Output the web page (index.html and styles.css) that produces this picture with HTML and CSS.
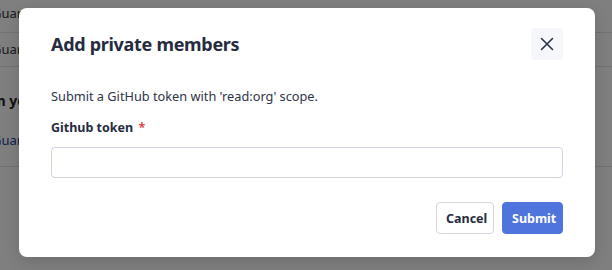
FILE: index.html
```html
<!DOCTYPE html>
<html lang="en">
<head>
    <meta charset="utf-8">
    <title>Add private members</title>
    <link rel="stylesheet" href="styles.css">
</head>
<body>
    <!-- Page behind the modal -->
    <div class="page">
        <div class="row row-top">Guard members list</div>
        <div class="row">Guard members list</div>
        <div class="section">
            <p class="section-title">m your organisation</p>
            <a class="section-link" href="#">Guard settings</a>
        </div>
    </div>

    <div class="overlay">
        <div class="modal">
            <div class="modal-header">
                <h2 class="modal-title">Add private members</h2>
                <button class="close-btn" aria-label="Close">
                    <svg width="14" height="14" viewBox="0 0 14 14">
                        <path d="M1.5 1.5 L12.5 12.5 M12.5 1.5 L1.5 12.5" stroke="#2b3046" stroke-width="1.6" stroke-linecap="round"/>
                    </svg>
                </button>
            </div>

            <p class="modal-text">Submit a GitHub token with 'read:org' scope.</p>

            <label class="field-label" for="token">Github token <span class="required">*</span></label>
            <input class="field-input" type="text" id="token">

            <div class="modal-footer">
                <button class="btn btn-cancel">Cancel</button>
                <button class="btn btn-submit">Submit</button>
            </div>
        </div>
    </div>
</body>
</html>
```

FILE: styles.css
```css
body {
    margin: 0;
    font-family: "Noto Sans", "Open Sans", sans-serif;
    color: #2a2f45;
    background-color: #fff;
    width: 612px;
    height: 270px;
    overflow: hidden;
    position: relative;
}

/* Page behind the modal */
.page {
    padding: 0;
}

.row {
    height: 33px;
    line-height: 33px;
    text-indent: -8px;
    font-size: 13px;
    color: #333;
    border-bottom: 1px solid #e4e4e8;
    white-space: nowrap;
}

.row-top {
    margin-top: -3px;
    height: 35px;
}

.section {
    height: 98px;
    border-bottom: 1px solid #e4e4e8;
    padding-top: 1px;
}

.section-title {
    margin: 23px 0 0 -8px;
    font-size: 14px;
    font-weight: 700;
    color: #222;
    white-space: nowrap;
}

.section-link {
    display: block;
    margin: 21px 0 0 -8px;
    font-size: 13px;
    color: #1d3f8f;
    text-decoration: none;
    white-space: nowrap;
}

.overlay {
    position: absolute;
    top: 0;
    left: 0;
    width: 100%;
    height: 100%;
    background-color: rgba(0, 0, 0, 0.5);
}

/* Modal */
.modal {
    position: absolute;
    top: 8px;
    left: 19px;
    width: 576px;
    height: 249px;
    box-sizing: border-box;
    background-color: #fff;
    border-radius: 8px;
    padding: 20px 32px 0 32px;
    box-shadow: 0 4px 16px rgba(0, 0, 0, 0.15);
}

.modal-header {
    display: flex;
    align-items: center;
    justify-content: space-between;
    height: 32px;
}

.modal-title {
    margin: 0;
    font-size: 18px;
    font-weight: 700;
    color: #262b40;
    letter-spacing: -0.3px;
}

.close-btn {
    width: 32px;
    height: 32px;
    border: none;
    border-radius: 4px;
    background-color: #f6f7fa;
    display: flex;
    align-items: center;
    justify-content: center;
    padding: 0;
    cursor: pointer;
}

.modal-text {
    margin: 28px 0 0 0;
    font-size: 12.75px;
    line-height: 17px;
    color: #2e3348;
}

.field-label {
    display: block;
    margin-top: 14px;
    font-size: 12.5px;
    font-weight: 700;
    line-height: 17px;
    color: #262b40;
}

.required {
    color: #e0474c;
    margin-left: 2px;
}

.field-input {
    display: block;
    box-sizing: border-box;
    width: 512px;
    height: 31px;
    margin-top: 11px;
    border: 1px solid #d3d1e2;
    border-radius: 4px;
    background-color: #fff;
}

.modal-footer {
    display: flex;
    justify-content: flex-end;
    gap: 8px;
    margin-top: 24px;
}

.btn {
    height: 32px;
    box-sizing: border-box;
    border-radius: 4px;
    font-family: "Noto Sans", "Open Sans", sans-serif;
    font-size: 12.5px;
    font-weight: 700;
    padding: 0 9px;
    cursor: pointer;
}

.btn-cancel {
    width: 58px;
    background-color: #fff;
    border: 1px solid #d6d5e0;
    color: #262b40;
}

.btn-submit {
    width: 61px;
    background-color: #4f75dd;
    border: 1px solid #4f75dd;
    color: #fff;
}
```
